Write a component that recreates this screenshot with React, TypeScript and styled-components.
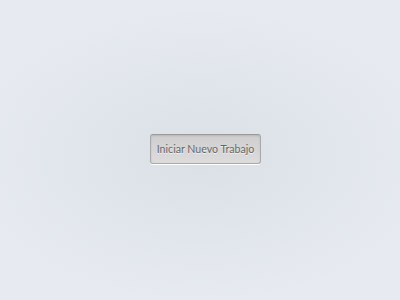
import React from 'react'
import styled, { createGlobalStyle } from 'styled-components'

const GlobalStyle = createGlobalStyle`
  html, body, #root {
    margin: 0;
    padding: 0;
    height: 100%;
  }
  body {
    font-family: Lato, 'Noto Sans', sans-serif;
  }
`

const Page = styled.div`
  height: 100%;
  display: flex;
  align-items: center;
  justify-content: center;
  padding: 0 0 3px 11px;
  box-sizing: border-box;
  background: radial-gradient(ellipse 60% 50% at 50% 52%, #dbdfe6 0%, #e1e5ec 55%, #e7eaf1 100%);
`

const StartButton = styled.button`
  font-family: Lato, 'Noto Sans', sans-serif;
  font-size: 10.6px;
  color: #656565;
  text-shadow: 0 1px 0 rgba(255, 255, 255, 0.7);
  height: 30px;
  padding: 0 6px;
  border: 1px solid #a9a9a9;
  border-top-color: #9a9a9a;
  border-radius: 3px;
  background: linear-gradient(#cecece, #dcdcdc);
  box-shadow: 0 1px 0 #ffffff, inset 0 1px 2px rgba(0, 0, 0, 0.12);
  cursor: pointer;
`

export default function App() {
  return (
    <>
      <GlobalStyle />
      <Page>
        <StartButton>Iniciar Nuevo Trabajo</StartButton>
      </Page>
    </>
  )
}
